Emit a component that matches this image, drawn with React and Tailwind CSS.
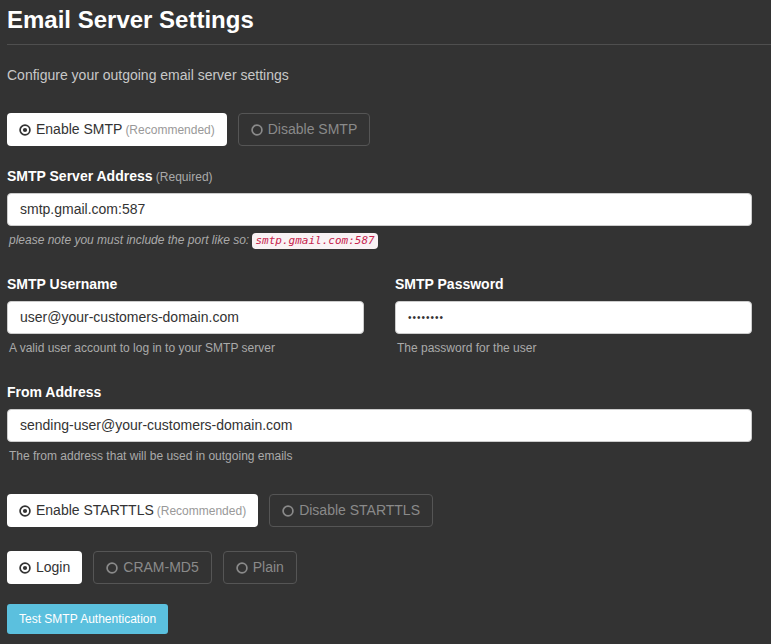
const Radio = ({ on }) => (
  <svg width="12" height="12" viewBox="0 0 12 12" className="shrink-0">
    <circle cx="6" cy="6" r="4.9" fill="none" stroke="currentColor" strokeWidth="1.7" />
    {on && <circle cx="6" cy="6" r="2.1" fill="currentColor" />}
  </svg>
);

function Choice({ on, label, note }) {
  if (on) {
    return (
      <button className="h-[33px] px-3 flex items-center gap-[5px] rounded-[4px] bg-white text-[14px] text-[#333]">
        <Radio on />
        <span>{label}</span>
        {note && <span className="text-[12px] text-[#999] ml-[-2px]">{note}</span>}
      </button>
    );
  }
  return (
    <button className="h-[33px] px-3 flex items-center gap-[5px] rounded-[4px] border border-[#555] text-[14px] text-[#8a8a8a]">
      <Radio />
      <span>{label}</span>
    </button>
  );
}

function Field({ label, value, help, extra }) {
  return (
    <div className="flex flex-col">
      <label className="h-[20px] text-[14px] font-bold text-white leading-[20px]">
        {label}
        {extra && <span className="font-normal text-[12px] text-[#aaa]"> {extra}</span>}
      </label>
      <div className="mt-[7px] h-[33px] rounded-[4px] bg-white border border-[#ccc] flex items-center px-3 text-[14px] text-[#333]">
        {value}
      </div>
      <div className="mt-[5px] h-[18px] px-[2px] text-[12px] text-[#aaa] leading-[18px]">{help}</div>
    </div>
  );
}

export default function App() {
  return (
    <div
      className="min-h-[644px] w-[771px] bg-[#333333] pl-[7px] pb-4"
      style={{ fontFamily: '"Liberation Sans", Arial, sans-serif' }}
    >
      <h1 className="pt-[7px] text-[24px] leading-[26px] font-bold text-white">Email Server Settings</h1>
      <div className="mt-[11px] h-px bg-[#4f4f4f]" />
      <p className="mt-[21px] text-[14px] leading-[18px] text-[#c8c8c8]">
        Configure your outgoing email server settings
      </p>

      <div className="w-[745px]">
        <div className="mt-[29px] flex gap-[11px]">
          <Choice on label="Enable SMTP" note="(Recommended)" />
          <Choice label="Disable SMTP" />
        </div>

        <div className="mt-[20px]">
          <Field
            label="SMTP Server Address"
            extra="(Required)"
            value="smtp.gmail.com:587"
            help={
              <span className="italic">
                please note you must include the port like so:{" "}
                <code className="inline-block bg-[#f9f2f4] text-[#c7254e] rounded-[4px] px-[3px] leading-[16px] text-[11px] italic" style={{ fontFamily: '"DejaVu Sans Mono", monospace' }}>
                  smtp.gmail.com:587
                </code>
              </span>
            }
          />
        </div>

        <div className="mt-[25px] grid grid-cols-2 gap-[31px]">
          <Field label="SMTP Username" value="user@your-customers-domain.com" help="A valid user account to log in to your SMTP server" />
          <Field label="SMTP Password" value={<span className="tracking-[1px] text-[10px]">••••••••</span>} help="The password for the user" />
        </div>

        <div className="mt-[25px]">
          <Field
            label="From Address"
            value="sending-user@your-customers-domain.com"
            help="The from address that will be used in outgoing emails"
          />
        </div>

        <div className="mt-[29px] flex gap-[11px]">
          <Choice on label="Enable STARTTLS" note="(Recommended)" />
          <Choice label="Disable STARTTLS" />
        </div>

        <div className="mt-[24px] flex gap-[11px]">
          <Choice on label="Login" />
          <Choice label="CRAM-MD5" />
          <Choice label="Plain" />
        </div>

        <button className="mt-[20px] h-[30px] px-[12px] rounded-[3px] bg-[#5bc0de] text-white text-[12px]">
          Test SMTP Authentication
        </button>
      </div>
    </div>
  );
}
